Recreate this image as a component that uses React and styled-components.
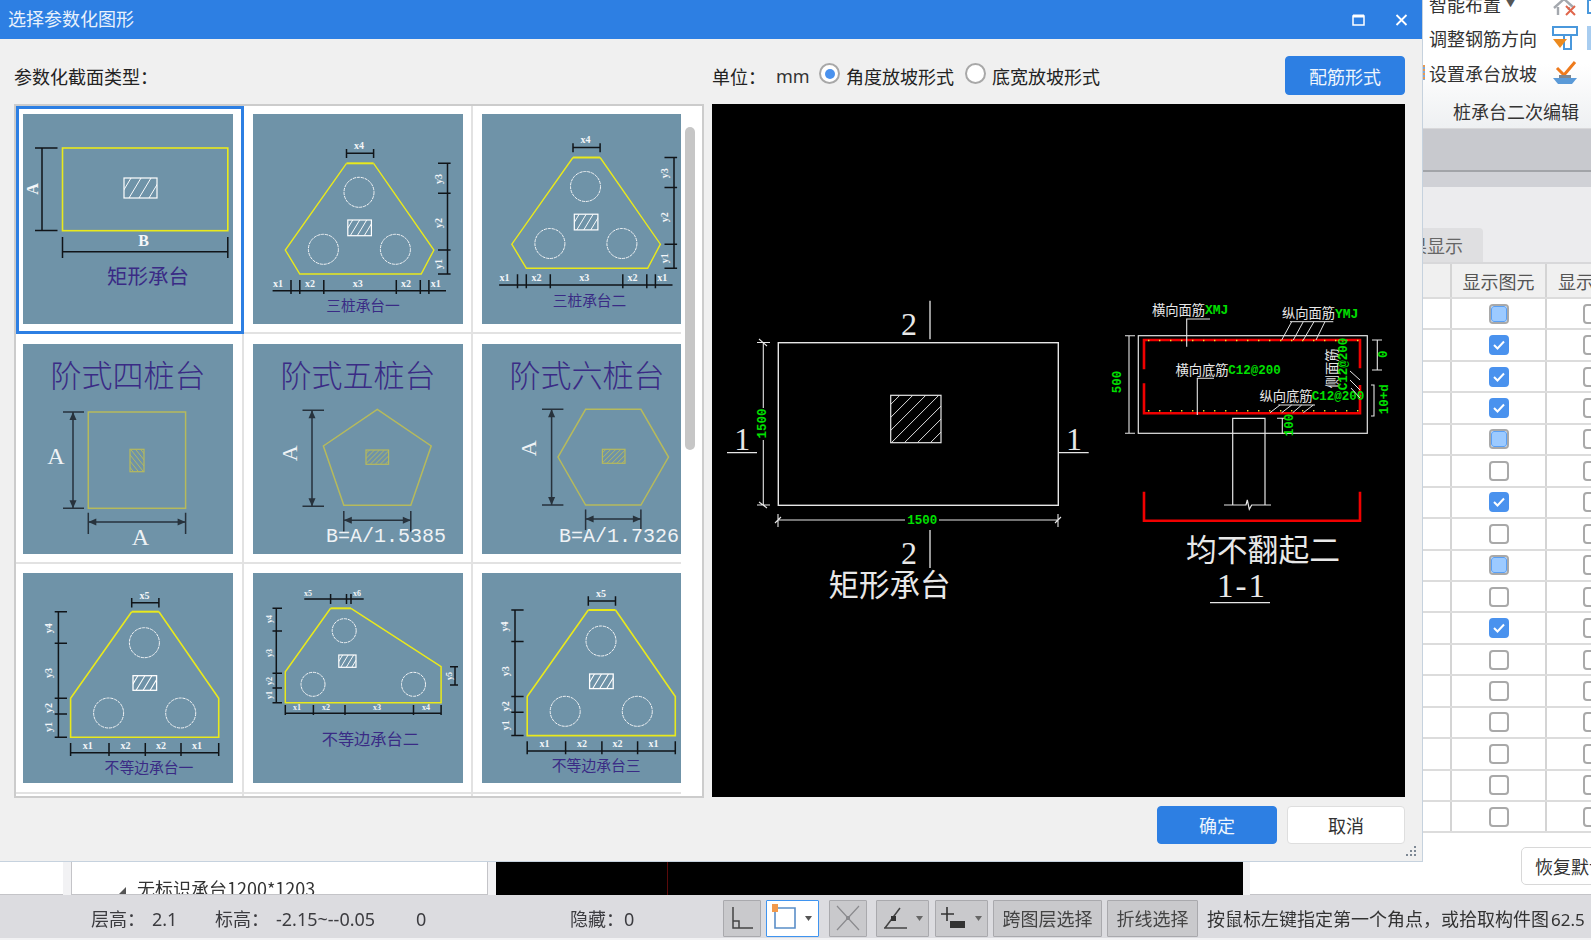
import React, { useId } from 'react';
import styled, { createGlobalStyle } from 'styled-components';

const FONT = '"Noto Sans", "Noto Sans CJK SC", sans-serif';
const CJK = '"Noto Sans CJK SC", sans-serif';
const SERIF = '"Liberation Serif", "Noto Sans CJK SC", serif';
const BLUE = '#2d7fe3';
const YEL = '#e9e91c';
const DULL = '#b6ba5c';
const INK = '#101418';
const DARK = '#27323c';
const PURPLE = '#3a2b85';
const GREEN = '#00e000';
const RED = '#f00000';

const Global = createGlobalStyle`
  html, body { margin: 0; padding: 0; width: 1591px; height: 940px; overflow: hidden; background: #f2f2f4; }
  #root { width: 1591px; height: 940px; }
  * { box-sizing: border-box; }
`;

const Page = styled.div`
  display: grid;
  grid-template-rows: 862px 33px 43px;
  width: 1591px;
  height: 938px;
  position: relative;
  overflow: hidden;
  font-family: ${FONT};
  font-size: 18px;
  color: #333;
  filter: blur(0.45px);
`;
const TopRow = styled.div`
  display: grid;
  grid-template-columns: 1423px 168px;
  min-height: 0;
`;

/* dialog */
const Dialog = styled.section`
  display: flex;
  flex-direction: column;
  position: relative;
  background: #f0f0f0;
  border-right: 1px solid #c6d2de;
  border-bottom: 1px solid #c6d2de;
`;
const TitleBar = styled.header`
  flex: 0 0 39px;
  display: flex;
  align-items: center;
  background: ${BLUE};
  color: #e8f1fc;
  padding: 0 14px 0 8px;
`;
const TitleText = styled.div`
  flex: 1;
  font-family: ${CJK};
  font-size: 18px;
  margin-bottom: 3px;
`;
const WinButton = styled.button`
  width: 13px;
  height: 12px;
  margin-left: 30px;
  padding: 0;
  display: flex;
  background: none;
  border: 0;
`;
const DialogBody = styled.div`
  flex: 1;
  display: grid;
  grid-template-columns: 698px 693px;
  grid-template-rows: 65px 693px 1fr;
  padding-left: 14px;
`;
const LeftHead = styled.div`
  display: flex;
  align-items: center;
  padding-top: 9px;
  font-family: ${CJK};
  color: #222;
`;
const RightHead = styled.div`
  display: flex;
  align-items: center;
  padding-top: 8px;
  color: #222;
  font-family: ${FONT};
`;
const UnitLabel = styled.span`
  width: 64px;
`;
const UnitValue = styled.span`
  width: 43px;
  color: #333;
`;
const RadioCircle = styled.span`
  width: 21px;
  height: 21px;
  margin-top: -4px;
  border-radius: 50%;
  background: #fff;
  border: 2px solid #a8a8a8;
  display: flex;
  align-items: center;
  justify-content: center;
  &::after {
    content: '';
    width: 10px;
    height: 10px;
    border-radius: 50%;
    background: ${(p) => (p.$on ? '#4a92ee' : 'transparent')};
  }
`;
const RadioText = styled.span`
  margin: 0 11px 0 6px;
`;
const PrimaryButton = styled.button`
  width: ${(p) => p.$w}px;
  height: ${(p) => p.$h}px;
  background: ${(p) => (p.$white ? '#fff' : BLUE)};
  color: ${(p) => (p.$white ? '#333' : '#eef5fd')};
  border: 1px solid ${(p) => (p.$white ? '#dedede' : BLUE)};
  border-radius: 4px;
  font-family: ${CJK};
  font-size: 18px;
  padding: 0;
`;
const ConfigButton = styled(PrimaryButton)`
  margin-left: auto;
`;
const ListPanel = styled.div`
  display: flex;
  width: 690px;
  height: 694px;
  background: #fff;
  border: 2px solid #cccccc;
`;
const ListViewport = styled.div`
  width: 665px;
  overflow: hidden;
  flex: none;
`;
const ThumbGrid = styled.div`
  display: grid;
  grid-template-columns: 228px 229px 229px;
  grid-template-rows: 228px 230px 230px 20px;
  width: 686px;
`;
const Cell = styled.div`
  padding: ${(p) => p.$top}px 0 0 ${(p) => p.$left}px;
  border-right: 2px solid #e2e2e2;
  border-bottom: 2px solid #e2e2e2;
  position: relative;
  overflow: hidden;
  ${(p) => p.$selected && `outline: 3px solid ${BLUE}; outline-offset: -3px; border-color: transparent;`}
`;
const Thumb = styled.svg`
  display: block;
  width: 210px;
  height: 210px;
  background: #6f93a8;
`;
const ScrollTrack = styled.div`
  flex: 1;
  padding: 21px 7px 0 4px;
`;
const ScrollThumb = styled.div`
  height: 323px;
  border-radius: 6px;
  background: #c6c6c6;
`;
const Canvas = styled.svg`
  display: block;
  width: 693px;
  height: 693px;
  background: #000;
`;
const DialogFoot = styled.div`
  grid-column: 2;
  display: flex;
  justify-content: flex-end;
  gap: 10px;
  padding-top: 9px;
`;
const Grip = styled.svg`
  position: absolute;
  right: 5px;
  bottom: 4px;
  width: 12px;
  height: 12px;
`;

/* svg texts */
const DimText = styled.text`
  font-family: ${SERIF};
  font-size: ${(p) => p.$s || 10}px;
  font-weight: 700;
  fill: #f4f6f8;
  text-anchor: middle;
  dominant-baseline: central;
`;
const CapText = styled.text.attrs({ dy: '-0.08em' })`
  font-family: ${CJK};
  font-size: ${(p) => p.$s}px;
  fill: ${PURPLE};
  text-anchor: middle;
  dominant-baseline: central;
`;
const BigLetter = styled.text`
  font-family: ${SERIF};
  font-size: ${(p) => p.$s || 24}px;
  fill: #eef2f5;
  text-anchor: middle;
  dominant-baseline: central;
`;
const FormulaText = styled.text`
  font-family: "Liberation Mono", monospace;
  font-size: 20px;
  fill: #eef2f5;
  dominant-baseline: central;
`;
const CadText = styled.text.attrs((p) => ({ dy: p.$serif ? '0' : '-0.08em' }))`
  font-family: ${(p) => (p.$serif ? SERIF : CJK)};
  font-size: ${(p) => p.$s}px;
  letter-spacing: ${(p) => p.$ls || 0}px;
  fill: ${(p) => p.$c || '#e8e8e8'};
  text-anchor: ${(p) => p.$a || 'middle'};
  dominant-baseline: central;
`;
const CadCode = styled.text`
  font-family: "Liberation Mono", monospace;
  font-size: ${(p) => p.$s || 12.5}px;
  font-weight: 700;
  fill: ${GREEN};
  text-anchor: ${(p) => p.$a || 'middle'};
  dominant-baseline: central;
`;

/* svg helpers */
const P = ({ d, c = INK, w = 1.5, dash, fill = 'none' }) => (
  <path d={d} stroke={c} strokeWidth={w} strokeDasharray={dash} fill={fill} />
);
const Hatch = ({ x, y, w, h, c = '#fff', step = 8, sw = 1.2, k = 0.6 }) => {
  const id = useId();
  const lines = [];
  const from = Math.min(0, k * h) + step * 0.7;
  const to = w + Math.max(0, k * h);
  for (let t = from; t < to; t += step) {
    lines.push(`M${x + t} ${y}L${x + t - k * h} ${y + h}`);
  }
  return (
    <g>
      <clipPath id={id}>
        <rect x={x} y={y} width={w} height={h} />
      </clipPath>
      <g clipPath={`url(#${id})`}>
        <P d={lines.join('')} c={c} w={sw * 0.8} />
      </g>
      <rect x={x} y={y} width={w} height={h} fill="none" stroke={c} strokeWidth={sw} />
    </g>
  );
};
const Pile = ({ x, y, r = 15 }) => (
  <circle cx={x} cy={y} r={r} fill="none" stroke="#f2f4f6" strokeWidth={1} strokeDasharray="3.2 0.8" />
);
const Rot = ({ Comp = DimText, x, y, children, ...rest }) => (
  <Comp x={x} y={y} transform={`rotate(-90 ${x} ${y})`} {...rest}>
    {children}
  </Comp>
);

const RectThumb = () => (
  <Thumb viewBox="0 0 210 210">
    <rect x="39.5" y="34" width="165.3" height="82.7" fill="none" stroke={YEL} strokeWidth="1.6" />
    <P d="M19 34V116.5M12 34H34.5M12 116.5H34.5" />
    <Rot x={9} y={75} $s={16}>A</Rot>
    <Hatch x={101} y={64} w={33} h={20} step={10} />
    <P d="M39.5 123V144M204.8 123V144M39.5 137.7H204.8" />
    <DimText x={120.5} y={126} $s={16}>B</DimText>
    <CapText x={125} y={162.5} $s={20.5}>矩形承台</CapText>
  </Thumb>
);

const TriGroup = ({ dx, dy, label }) => (
  <g transform={`translate(${dx} ${dy})`}>
    <P d="M93.5 49.3H120.6" c={YEL} w={2} />
    <P d="M93.5 49.3L32.3 136L46.8 160H168.2L180.9 136L120.6 49.3" c={YEL} w={1.4} />
    <Pile x={106} y={78.3} />
    <Pile x={70.4} y={135.3} />
    <Pile x={142.4} y={135.3} />
    <Hatch x={94.8} y={106} w={23.6} h={15.7} step={7} />
    <P d="M93.5 39.3H120.6M93.5 35V44M120.6 35V44" />
    <DimText x={106} y={31.5}>x4</DimText>
    <P d="M194.5 49.3V160M185 49.3H197.6M185 79.3H197.6M185 136H197.6M185 160H197.6" />
    <Rot x={185} y={65}>y3</Rot>
    <Rot x={185} y={109}>y2</Rot>
    <Rot x={185} y={150}>y1</Rot>
    <P d="M19.6 176.7H193M38 166V180M46.8 166V180M70.8 166V180M143.3 166V180M167.3 166V180M175.9 166V180" />
    <DimText x={25} y={169}>x1</DimText>
    <DimText x={57} y={169}>x2</DimText>
    <DimText x={104.8} y={169}>x3</DimText>
    <DimText x={153} y={169}>x2</DimText>
    <DimText x={182.7} y={169}>x1</DimText>
    <CapText x={110} y={192} $s={14.7}>{label}</CapText>
  </g>
);
const TriThumb = (props) => (
  <Thumb viewBox="0 0 210 210">
    <TriGroup {...props} />
  </Thumb>
);

const Arrow = ({ x, y, dir }) => {
  const m = { u: `M${x} ${y}l-3.5 8h7z`, d: `M${x} ${y}l-3.5 -8h7z`, l: `M${x} ${y}l8 -3.5v7z`, r: `M${x} ${y}l-8 -3.5v7z` };
  return <path d={m[dir]} fill={DARK} />;
};
const CapTextSerif = styled.text.attrs({ dy: '-0.08em' })`
  font-family: ${CJK};
  font-size: 31px;
  font-weight: 300;
  fill: ${PURPLE};
  text-anchor: middle;
  dominant-baseline: central;
`;
const StepTitle = ({ children }) => (
  <CapTextSerif x={105} y={32}>{children}</CapTextSerif>
);
const FourThumb = () => (
  <Thumb viewBox="0 0 210 210">
    <StepTitle>阶式四桩台</StepTitle>
    <rect x="65.3" y="68" width="97.3" height="96.3" fill="none" stroke={DULL} strokeWidth="1.5" />
    <P d="M50 68V164.3M40 68H61M40 164.3H61" c={DARK} />
    <Arrow x={50} y={68} dir="u" />
    <Arrow x={50} y={164.3} dir="d" />
    <BigLetter x={33} y={112}>A</BigLetter>
    <Hatch x={107} y={105.3} w={14} h={22.4} c={DULL} step={5} k={-0.8} />
    <P d="M65.3 178H162.6M65.3 168.7V190M162.6 168.7V190" c={DARK} />
    <Arrow x={65.3} y={178} dir="l" />
    <Arrow x={162.6} y={178} dir="r" />
    <BigLetter x={117.3} y={192.7}>A</BigLetter>
  </Thumb>
);
const FiveThumb = () => (
  <Thumb viewBox="0 0 210 210">
    <StepTitle>阶式五桩台</StepTitle>
    <path d="M124.3 65.3L178.2 102L157.8 161.3H90.8L70.4 102Z" fill="none" stroke={DULL} strokeWidth="1.5" />
    <P d="M59 66.3V162.3M49.5 66.3H71M49.5 162.3H71" c={DARK} />
    <Arrow x={59} y={66.3} dir="u" />
    <Arrow x={59} y={162.3} dir="d" />
    <Rot Comp={BigLetter} x={37} y={109.3} $s={22}>A</Rot>
    <Hatch x={113} y={106} w={22.6} h={14.3} c={DULL} step={5} k={1} />
    <P d="M90.8 176.3H157.8M90.8 167V187.7M157.8 167V187.7" c={DARK} />
    <Arrow x={90.8} y={176.3} dir="l" />
    <Arrow x={157.8} y={176.3} dir="r" />
    <FormulaText x={73} y={192}>B=A/1.5385</FormulaText>
  </Thumb>
);
const SixThumb = () => (
  <Thumb viewBox="0 0 210 210">
    <StepTitle>阶式六桩台</StepTitle>
    <path d="M103.6 65.3H158.9L186.5 113L158.9 161H103.6L76 113Z" fill="none" stroke={DULL} strokeWidth="1.5" />
    <P d="M69.6 65.3V161M60 65.3H81.4M60 161H81.4" c={DARK} />
    <Arrow x={69.6} y={65.3} dir="u" />
    <Arrow x={69.6} y={161} dir="d" />
    <Rot Comp={BigLetter} x={47} y={104.3} $s={22}>A</Rot>
    <Hatch x={120.4} y={105.3} w={22.6} h={14} c={DULL} step={5} k={1} />
    <P d="M103.6 175H158.9M103.6 165.5V186M158.9 165.5V186" c={DARK} />
    <Arrow x={103.6} y={175} dir="l" />
    <Arrow x={158.9} y={175} dir="r" />
    <FormulaText x={77} y={192}>B=A/1.7326</FormulaText>
  </Thumb>
);

const UneqGroup = ({ dx, dy, label, labelX = 126 }) => (
  <g transform={`translate(${dx} ${dy})`}>
    <P d="M108.7 38.7H135.9" c={YEL} w={2} />
    <P d="M108.7 38.7L47.6 125.3V164.3H195.7V125.3L135.9 38.7" c={YEL} w={1.6} />
    <Pile x={121.4} y={69.7} />
    <Pile x={85.6} y={140} />
    <Pile x={157.7} y={140} />
    <Hatch x={110} y={102.7} w={23.6} h={14.6} step={7} sw={1.3} />
    <P d="M108.7 29.7H135.9M108.7 25V34.5M135.9 25V34.5" />
    <DimText x={121.5} y={22}>x5</DimText>
    <P d="M35.4 38.7V164.3M31.7 38.7H44M31.7 70.3H44M31.7 125.3H44M31.7 141H44M31.7 164.3H44" />
    <Rot x={25.4} y={55.3}>y4</Rot>
    <Rot x={25.4} y={100}>y3</Rot>
    <Rot x={25.4} y={135}>y2</Rot>
    <Rot x={25.4} y={154}>y1</Rot>
    <P d="M47.6 179.7H195.7M47.6 170V183M86 170V183M122.3 170V183M158 170V183M195.7 170V183" />
    <DimText x={64.8} y={172.7}>x1</DimText>
    <DimText x={102.4} y={172.7}>x2</DimText>
    <DimText x={138} y={172.7}>x2</DimText>
    <DimText x={174} y={172.7}>x1</DimText>
    <CapText x={labelX} y={194.7} $s={14.8}>{label}</CapText>
  </g>
);
const UneqThumb = (props) => (
  <Thumb viewBox="0 0 210 210">
    <UneqGroup {...props} />
  </Thumb>
);
const SlantThumb = () => (
  <Thumb viewBox="0 0 210 210">
    <P d="M77.6 35.3H98" c={YEL} w={2} />
    <P d="M77.6 35.3L32.3 98.7V129.7H188.1V93.7L98 35.3" c={YEL} w={1.5} />
    <Pile x={91.2} y={57.7} r={12} />
    <Pile x={60} y={111.3} r={12} />
    <Pile x={160.5} y={111.3} r={12} />
    <Hatch x={85.8} y={82} w={17.2} h={12.3} step={5.5} />
    <P d="M51.3 26H110.7M77.6 21V31M93.5 21V31M98 21V31" />
    <DimText x={55} y={20} $s={8}>x5</DimText>
    <DimText x={104} y={20} $s={8}>x6</DimText>
    <P d="M23.3 35.3V129.7M19.5 35.3H29M19.5 58H29M19.5 100.3H29M19.5 115H29M19.5 129.7H29" />
    <Rot x={16.5} y={46} $s={8}>y4</Rot>
    <Rot x={16.5} y={80} $s={8}>y3</Rot>
    <Rot x={16.5} y={108} $s={8}>y2</Rot>
    <Rot x={16.5} y={122} $s={8}>y1</Rot>
    <P d="M202 93.7V112M197 93.7H205M197 112H205" />
    <Rot x={196} y={103} $s={8}>y5</Rot>
    <P d="M32.3 140.3H188.1M32.3 132V142M60.4 132V142M92 132V142M160.5 132V142M188.1 132V142" />
    <DimText x={44} y={134.3} $s={8}>x1</DimText>
    <DimText x={73} y={134.3} $s={8}>x2</DimText>
    <DimText x={124} y={134.3} $s={8}>x3</DimText>
    <DimText x={173} y={134.3} $s={8}>x4</DimText>
    <CapText x={117.3} y={166} $s={16.2}>不等边承台二</CapText>
  </Thumb>
);

const CadDrawing = () => {
  const W = '#e6e6e6';
  const topDots = [];
  for (let x = 1148; x < 1358; x += 11) topDots.push(`M${x} 340.5h1.4M${x} 410.7h1.4`);
  return (
    <Canvas viewBox="712 104 693 693">
      {/* plan */}
      <rect x="778.3" y="342.7" width="280" height="162.6" fill="none" stroke={W} strokeWidth="1.4" />
      <Hatch x={890.7} y={395.3} w={50.3} h={47.4} c={W} step={13} k={1} />
      <P d="M930 300.7V339.3M930 530V568" c={W} w={1.3} />
      <CadText x={909} y={324} $s={32} $serif>2</CadText>
      <CadText x={909} y={553} $s={32} $serif>2</CadText>
      <CadText x={742.3} y={439} $s={32} $serif>1</CadText>
      <CadText x={1074} y={439} $s={32} $serif>1</CadText>
      <P d="M727 452.7H757M1058 452.7H1088.7" c={W} w={1.3} />
      <P d="M763.3 342V505M757 342.5H770M757 505H770M759 339L767 346M759 502L767 508" c={W} w={1.1} />
      <rect x="757" y="408" width="13" height="32" fill="#000" />
      <Rot Comp={CadCode} x={763} y={423.5}>1500</Rot>
      <P d="M778 520H1058M778 514V527M1058 514V527M775 523L781 517M1055 523L1061 517" c={W} w={1.1} />
      <rect x="905" y="514" width="34" height="13" fill="#000" />
      <CadCode x={922.3} y={521}>1500</CadCode>
      <CadText x={889.5} y={585} $s={30.5}>矩形承台</CadText>

      {/* section */}
      <rect x="1138.3" y="335.7" width="229" height="97.6" fill="none" stroke={W} strokeWidth="1.2" />
      <P d="M1144 369.3V340H1360V368.3M1144 383.3V413.3H1360V385" c={RED} w={2.6} />
      <P d={topDots.join('')} c="#f0e030" w={1.4} />
      <CadText x={1178.5} y={310.5} $s={13.3}>横向面筋</CadText>
      <CadCode x={1205} y={310.5} $a="start" $s={13}>XMJ</CadCode>
      <P d="M1210 319H1186.7V346.7" c={W} w={1.1} />
      <CadText x={1308.5} y={314} $s={13.3}>纵向面筋</CadText>
      <CadCode x={1335} y={314} $a="start" $s={13}>YMJ</CadCode>
      <P d="M1290 321.7H1333.3M1291.7 321.7L1281.7 340M1303.3 321.7L1293.3 340M1314 321.7L1303.3 340M1325 321.7L1316 340" c={W} w={1} />
      <CadText x={1202} y={370.7} $s={13.3}>横向底筋</CadText>
      <CadCode x={1228.3} y={370.7} $a="start" $s={12.5}>C12@200</CadCode>
      <P d="M1214 378.3H1197.3V415" c={W} w={1.1} />
      <CadText x={1286} y={396.7} $s={13.3}>纵向底筋</CadText>
      <CadCode x={1311.7} y={396.7} $a="start" $s={12.5}>C12@200</CadCode>
      <P d="M1278.3 405H1315M1280 405L1270 412.7M1291.7 405L1281.7 412.7M1301.7 405L1292.7 412.7M1313.3 405L1303.3 412.7" c={W} w={1} />
      <Rot Comp={CadText} x={1332.7} y={368.3} $s={13.3}>侧面筋</Rot>
      <Rot Comp={CadCode} x={1344.3} y={364}>C12@200</Rot>
      <P d="M1350 371L1360 380M1350 380L1360 390M1351 388L1360 398" c={W} w={1} />
      <Rot Comp={CadCode} x={1118.3} y={382}>500</Rot>
      <P d="M1129 335.7V433.3M1125 335.7H1135M1125 433.3H1135" c={W} w={1.1} />
      <P d="M1377.3 340V370M1372 340H1382M1372 370H1382" c={W} w={1.1} />
      <Rot Comp={CadCode} x={1384} y={354.3}>0</Rot>
      <P d="M1371 385H1374V416H1371" c={W} w={1.1} />
      <Rot Comp={CadCode} x={1385} y={399.3}>10+d</Rot>
      <P d="M1282.3 418.3V434M1277 418.3H1285" c={W} w={1.1} />
      <Rot Comp={CadCode} x={1290} y={425}>100</Rot>
      <P d="M1232.7 505V418.3H1265V505M1224 505H1246L1247.3 500L1249.3 509.3L1251.7 505H1271" c={W} w={1.2} />
      <P d="M1144 491.7V520.7H1360V491.7" c={RED} w={2.6} />
      <CadText x={1263} y={549.5} $s={30.8}>均不翻起二</CadText>
      <CadText x={1242} y={586} $s={33} $serif $ls={2}>1-1</CadText>
      <P d="M1210 602.7H1270" c={W} w={1.3} />
    </Canvas>
  );
};

/* right side of the app */
const SidePanel = styled.aside`
  background: #fff;
  overflow: hidden;
  display: flex;
  flex-direction: column;
`;
const Ribbon = styled.div`
  flex: 0 0 128px;
  padding-left: 6px;
  background:
    repeating-linear-gradient(#e89a50 0 2px, #7fa8d8 2px 4px) 0 65px / 2px 15px no-repeat,
    linear-gradient(#ffffff 50%, #eef0f2);
  border-bottom: 1px solid #d8d8da;
  color: #333;
  font-family: ${CJK};
`;
const RibbonRow = styled.div`
  height: ${(p) => p.$h}px;
  display: flex;
  align-items: ${(p) => (p.$clip ? 'flex-end' : 'center')};
  white-space: nowrap;
`;
const RibbonLabel = styled.span`
  width: 123px;
  flex: none;
  ${(p) => p.$clip && 'line-height: 24px; margin-bottom: 3px;'}
`;
const Caret = styled.span`
  font-size: 9px;
  margin-left: 5px;
  vertical-align: 5px;
  color: #555;
`;
const RibbonIcon = styled.svg`
  width: 26px;
  height: 26px;
  flex: none;
`;
const RibbonIconNext = styled(RibbonIcon)`
  margin-left: 9px;
`;
const RibbonCaption = styled.div`
  height: 38px;
  line-height: 42px;
  padding-left: 24px;
`;
const Band = styled.div`
  flex: 0 0 ${(p) => p.$h}px;
  background: ${(p) => p.$bg};
  border-bottom: ${(p) => (p.$line ? `2px solid ${p.$line}` : '0')};
`;
const TabStrip = styled.div`
  flex: 0 0 44px;
  background: #ececee;
  border-bottom: 2px solid #d8d8da;
  padding-top: 8px;
`;
const Tab = styled.div`
  width: 60px;
  height: 34px;
  line-height: 34px;
  background: #dfdfe1;
  border-radius: 0 4px 0 0;
  color: #666;
  font-family: ${CJK};
  display: flex;
  justify-content: flex-end;
  padding-right: 20px;
  overflow: hidden;
  white-space: nowrap;
`;
const ColGrid = styled.div`
  display: grid;
  grid-template-columns: 29px 95px 44px;
  height: ${(p) => p.$h};
  background: ${(p) => p.$bg || '#fff'};
  border-bottom: 2px solid #dcdcdc;
  font-family: ${CJK};
  color: #555;
  flex: none;
`;
const ColCell = styled.div`
  border-right: 2px solid #d4d4d4;
  display: flex;
  align-items: center;
  justify-content: ${(p) => (p.$center ? 'center' : 'flex-start')};
  padding-left: ${(p) => p.$pad || 0}px;
  white-space: nowrap;
  overflow: hidden;
  &:last-child { border-right: 0; }
`;
const Check = styled.span`
  width: 20px;
  height: 20px;
  flex: none;
  border-radius: 4px;
  display: flex;
  align-items: center;
  justify-content: center;
  border: 2px solid ${(p) => (p.$state === 'on' ? '#4a92ee' : '#a9a9a9')};
  background: ${(p) => (p.$state === 'on' ? '#4a92ee' : '#fff')};
  &::after {
    content: '';
    display: ${(p) => (p.$state === 'part' ? 'block' : 'none')};
    width: 14px;
    height: 14px;
    border-radius: 3px;
    background: #9ccaff;
    border: 1px solid #5aa0f5;
  }
`;
const RestoreButton = styled.button`
  position: absolute;
  left: 1521px;
  top: 847px;
  width: 90px;
  height: 38px;
  padding: 0 0 0 13px;
  text-align: left;
  white-space: nowrap;
  overflow: hidden;
  background: #fff;
  border: 1px solid #d8d8d8;
  border-radius: 5px;
  font-family: ${CJK};
  font-size: 18px;
  color: #333;
`;

/* strip below the dialog */
const Strip = styled.div`
  display: grid;
  grid-template-columns: 63px 8px 417px 8px 747px 7px 341px;
  background: #f2f2f4;
  min-height: 0;
`;
const WhitePane = styled.div`
  background: #fff;
  border-bottom: 1px solid #c4c4c8;
  ${(p) => p.$edges && 'border-left: 1px solid #c4c4c8; border-right: 1px solid #c4c4c8;'}
  overflow: hidden;
  display: flex;
  align-items: flex-start;
  padding-left: ${(p) => p.$pad || 0}px;
  font-family: ${CJK};
  color: #333;
`;
const TreeTriangle = styled.span`
  width: 0;
  height: 0;
  margin: 25px 11px 0 0;
  border-left: 8px solid transparent;
  border-bottom: 8px solid #555;
`;
const TreeText = styled.span`
  line-height: 28px;
  margin-top: 12px;
  white-space: nowrap;
`;
const BlackPane = styled.div`
  background: #000;
  border-left: 1px solid #000;
  display: flex;
  padding-left: 170px;
  &::after { content: ''; width: 1px; background: #5a0a0a; }
`;
const Gap = styled.div``;

/* status bar */
const StatusBar = styled.footer`
  display: flex;
  align-items: center;
  background: #dcdce0;
  padding: 2px 0 0 91px;
  font-family: ${CJK};
  color: #3c3c40;
  white-space: nowrap;
  overflow: hidden;
`;
const Stat = styled.span`
  flex: none;
  width: ${(p) => p.$w}px;
`;
const Num = styled.span`
  font-family: "Noto Sans", sans-serif;
  font-size: 18px;
`;
const BarButton = styled.button`
  flex: none;
  width: ${(p) => p.$w}px;
  height: 37px;
  margin-left: ${(p) => p.$ml}px;
  margin-top: 1px;
  padding: 0;
  display: flex;
  align-items: center;
  justify-content: center;
  background: ${(p) => (p.$active ? '#fff' : '#c9c9cc')};
  border: 1px solid ${(p) => (p.$active ? '#3f94f0' : '#a9a9ad')};
  border-radius: 1px;
  font-family: ${CJK};
  font-size: 18px;
  color: #444;
`;
const BarIcon = styled.svg`
  width: ${(p) => p.$w || 34}px;
  height: 30px;
`;
const Message = styled.span`
  margin-left: 9px;
  color: #333;
`;
const MessageNum = styled(Num)`
  margin-left: 2px;
  font-size: 17px;
  color: #333;
`;

const rowStates = ['part', 'on', 'on', 'on', 'part', 'off', 'on', 'off', 'part', 'off', 'on', 'off', 'off', 'off', 'off', 'off', 'off'];
const rows = [
  [<RectThumb key="a" />, <TriThumb key="b" dx={0} dy={0} label="三桩承台一" />, <TriThumb key="c" dx={-2.5} dy={-5.8} label="三桩承台二" />],
  [<FourThumb key="a" />, <FiveThumb key="b" />, <SixThumb key="c" />],
  [<UneqThumb key="a" dx={0} dy={0} label="不等边承台一" />, <SlantThumb key="b" />, <UneqThumb key="c" dx={-2.4} dy={-1.7} labelX={116.6} label="不等边承台三" />],
];
const rowTop = [8, 10, 9];

export default function App() {
  return (
    <Page>
      <Global />
      <TopRow>
        <Dialog>
          <TitleBar>
            <TitleText>选择参数化图形</TitleText>
            <WinButton aria-label="最大化">
              <svg width="13" height="12" viewBox="0 0 13 12">
                <path d="M1 2h11v9H1z" fill="none" stroke="#fff" strokeWidth="1.5" />
                <path d="M1 2h11" stroke="#fff" strokeWidth="3" />
              </svg>
            </WinButton>
            <WinButton aria-label="关闭">
              <svg width="13" height="12" viewBox="0 0 13 12">
                <path d="M1.5 1l10 10M11.5 1l-10 10" stroke="#fff" strokeWidth="1.8" />
              </svg>
            </WinButton>
          </TitleBar>
          <DialogBody>
            <LeftHead>参数化截面类型：</LeftHead>
            <RightHead>
              <UnitLabel>单位：</UnitLabel>
              <UnitValue>mm</UnitValue>
              <RadioCircle $on />
              <RadioText>角度放坡形式</RadioText>
              <RadioCircle />
              <RadioText>底宽放坡形式</RadioText>
              <ConfigButton $w={120} $h={39}>配筋形式</ConfigButton>
            </RightHead>
            <ListPanel>
              <ListViewport>
                <ThumbGrid>
                  {rows.map((r, i) =>
                    r.map((t, j) => (
                      <Cell key={`${i}-${j}`} $top={rowTop[i]} $left={j === 0 ? 7 : 9} $selected={i === 0 && j === 0}>
                        {t}
                      </Cell>
                    )),
                  )}
                  <Cell $top={0} $left={0} />
                  <Cell $top={0} $left={0} />
                  <Cell $top={0} $left={0} />
                </ThumbGrid>
              </ListViewport>
              <ScrollTrack>
                <ScrollThumb />
              </ScrollTrack>
            </ListPanel>
            <CadDrawing />
            <DialogFoot>
              <PrimaryButton $w={120} $h={38}>确定</PrimaryButton>
              <PrimaryButton $w={118} $h={38} $white>取消</PrimaryButton>
            </DialogFoot>
          </DialogBody>
          <Grip viewBox="0 0 12 12">
            <path d="M9 1h2v2H9zM5 5h2v2H5zM9 5h2v2H9zM1 9h2v2H1zM5 9h2v2H5zM9 9h2v2H9z" fill="#7d8894" />
          </Grip>
        </Dialog>
        <SidePanel>
          <Ribbon>
            <RibbonRow $h={19} $clip>
              <RibbonLabel $clip>智能布置<Caret>▼</Caret></RibbonLabel>
              <RibbonIcon viewBox="0 0 26 26">
                <path d="M2 15L12 6l9 8M6 14v8M17 14v3" fill="none" stroke="#a4a8ae" strokeWidth="2.4" />
                <path d="M14 13l9 9M23 13l-9 9" stroke="#e0664c" strokeWidth="2" />
              </RibbonIcon>
              <RibbonIconNext viewBox="0 0 26 26">
                <path d="M1 7h24v13H1z" fill="#fff" stroke="#4a98dc" strokeWidth="2" />
              </RibbonIconNext>
            </RibbonRow>
            <RibbonRow $h={37}>
              <RibbonLabel>调整钢筋方向</RibbonLabel>
              <RibbonIcon viewBox="0 0 26 26">
                <path d="M1 2h24v8H1zM12 10h7v14h-7z" fill="#fff" stroke="#4a98dc" strokeWidth="2" />
                <path d="M1 14h14l-7 9z" fill="#ec8a1e" />
              </RibbonIcon>
              <RibbonIconNext viewBox="0 0 26 26">
                <path d="M0 1h26v24H0z" fill="#a8cdf0" />
              </RibbonIconNext>
            </RibbonRow>
            <RibbonRow $h={34}>
              <RibbonLabel>设置承台放坡</RibbonLabel>
              <RibbonIcon viewBox="0 0 26 26">
                <path d="M5 8l7 7L23 2" fill="none" stroke="#ee7a1c" strokeWidth="3" />
                <path d="M1 18h24l-5 6H6z" fill="#5a9ad8" />
                <path d="M7 15h12v3H7z" fill="#7c8690" />
              </RibbonIcon>
            </RibbonRow>
            <RibbonCaption>桩承台二次编辑</RibbonCaption>
          </Ribbon>
          <Band $h={43} $bg="#c8c9ce" $line="#a2a4a8" />
          <Band $h={15} $bg="#d0d1d6" />
          <Band $h={33} $bg="#ececee" />
          <TabStrip>
            <Tab>结果显示</Tab>
          </TabStrip>
          <ColGrid $h="35px" $bg="#f0f0f0">
            <ColCell />
            <ColCell $center>显示图元</ColCell>
            <ColCell $pad={11}>显示</ColCell>
          </ColGrid>
          {rowStates.map((s, i) => (
            <ColGrid key={i} $h="31.45px">
              <ColCell />
              <ColCell $center><Check $state={s}>
                {s === 'on' && (
                  <svg width="14" height="14" viewBox="0 0 14 14">
                    <path d="M2 7l3.5 3.5L12 3.5" fill="none" stroke="#fff" strokeWidth="2" />
                  </svg>
                )}
              </Check></ColCell>
              <ColCell $pad={36}><Check $state="off" /></ColCell>
            </ColGrid>
          ))}
        </SidePanel>
      </TopRow>
      <Strip>
        <WhitePane />
        <Gap />
        <WhitePane $edges $pad={46}>
          <TreeTriangle />
          <TreeText>无标识承台1200*1203</TreeText>
        </WhitePane>
        <Gap />
        <BlackPane />
        <Gap />
        <WhitePane />
      </Strip>
      <StatusBar>
        <Stat $w={61}>层高：</Stat>
        <Stat $w={63}><Num>2.1</Num></Stat>
        <Stat $w={61}>标高：</Stat>
        <Stat $w={140}><Num>-2.15~--0.05</Num></Stat>
        <Stat $w={154}><Num>0</Num></Stat>
        <Stat $w={153}>隐藏：<Num>0</Num></Stat>
        <BarButton $w={38} $ml={0}>
          <BarIcon viewBox="0 0 34 30">
            <path d="M8 4V25H28M8 18h6v7" fill="none" stroke="#444" strokeWidth="1.5" />
          </BarIcon>
        </BarButton>
        <BarButton $w={53} $ml={5} $active>
          <BarIcon $w={50} viewBox="0 0 50 30">
            <path d="M7 5h20v20H7z" fill="none" stroke="#5a8ec8" strokeWidth="1.6" />
            <path d="M4 1h6v8H4z" fill="#f29a4c" />
            <path d="M37 13h7l-3.5 5z" fill="#555" />
          </BarIcon>
        </BarButton>
        <BarButton $w={38} $ml={10}>
          <BarIcon viewBox="0 0 34 30">
            <path d="M6 3l22 24M28 3L6 27" stroke="#8a8a8e" strokeWidth="1.2" />
            <path d="M15 13h4v4h-4z" fill="#8a8a8e" />
          </BarIcon>
        </BarButton>
        <BarButton $w={53} $ml={9}>
          <BarIcon $w={50} viewBox="0 0 50 30">
            <path d="M6 25h23M7 25L22 5" fill="none" stroke="#444" strokeWidth="1.5" />
            <path d="M13 13h5v5h-5z" fill="#333" />
            <path d="M38 13h7l-3.5 5z" fill="#666" />
          </BarIcon>
        </BarButton>
        <BarButton $w={53} $ml={6}>
          <BarIcon $w={50} viewBox="0 0 50 30">
            <path d="M10 4v14M4 11h13" stroke="#333" strokeWidth="1.6" />
            <path d="M13 18h15v7H13z" fill="#333" />
            <path d="M38 13h7l-3.5 5z" fill="#666" />
          </BarIcon>
        </BarButton>
        <BarButton $w={109} $ml={5}>跨图层选择</BarButton>
        <BarButton $w={91} $ml={5}>折线选择</BarButton>
        <Message>按鼠标左键指定第一个角点，或拾取构件图<MessageNum>62.5</MessageNum></Message>
      </StatusBar>
      <RestoreButton>恢复默认</RestoreButton>
    </Page>
  );
}
